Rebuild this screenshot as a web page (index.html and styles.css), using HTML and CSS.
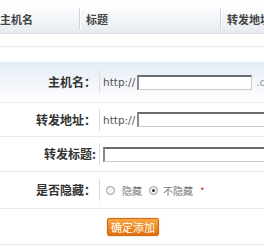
FILE: index.html
```html
<!DOCTYPE html>
<html lang="zh">
<head>
    <meta charset="UTF-8">
    <title>转发设置</title>
    <link rel="stylesheet" href="styles.css">
</head>
<body>
    <div class="list-head">
        <div class="col col-host">主机名</div>
        <div class="col col-title">标题</div>
        <div class="col col-url">转发地址</div>
    </div>
    <div class="list-empty"></div>

    <div class="form">
        <div class="row row-first">
            <div class="label">主机名：</div>
            <div class="value">
                <span class="prefix">http://</span>
                <input class="text short" type="text">
                <span class="suffix">.com</span>
            </div>
        </div>
        <div class="row">
            <div class="label">转发地址：</div>
            <div class="value">
                <span class="prefix">http://</span>
                <input class="text long" type="text">
            </div>
        </div>
        <div class="row">
            <div class="label">转发标题:</div>
            <div class="value">
                <input class="text long" type="text">
            </div>
        </div>
        <div class="row">
            <div class="label">是否隐藏：</div>
            <div class="value">
                <span class="radio"></span><span class="opt">隐藏</span>
                <span class="radio checked"></span><span class="opt">不隐藏</span>
                <span class="star">*</span>
            </div>
        </div>
        <div class="actions">
            <button class="submit">确定添加</button>
        </div>
    </div>
</body>
</html>
```

FILE: styles.css
```css
html, body {
    overflow: hidden;
}
body {
    margin: 0;
    width: 264px;
    font-family: "Noto Sans CJK SC", "DejaVu Sans", sans-serif;
    font-size: 12px;
    color: #333;
    background: #fff;
}
.list-head {
    display: flex;
    margin-top: 5px;
    height: 28px;
    align-items: center;
    background: linear-gradient(#ffffff, #e6ebf1);
    border-bottom: 1px solid #dde2e8;
    font-weight: bold;
    color: #444;
    font-size: 11px;
}
.col {
    box-sizing: border-box;
    height: 22px;
    line-height: 22px;
    padding-left: 6px;
    border-left: 1px solid #d0d5db;
    box-shadow: inset 1px 0 0 #fff;
    flex-shrink: 0;
    white-space: nowrap;
}
.col-host {
    width: 79px;
    padding-left: 0;
    border-left: none;
    box-shadow: none;
}
.col-title {
    width: 141px;
}
.col-url {
    flex: 1;
}
.list-empty {
    height: 12px;
    border-bottom: 1px solid #ebebeb;
}
.form {
    margin-top: 15px;
    background: linear-gradient(#e4ecf5, #ffffff 40px);
}
.row {
    display: flex;
    height: 33px;
    align-items: center;
    border-bottom: 1px solid #ebebeb;
}
.row-first {
    height: 40px;
}
.row:nth-child(3) {
    height: 34px;
}
.row:nth-child(4) {
    height: 36px;
}
.label {
    width: 100px;
    flex-shrink: 0;
    box-sizing: border-box;
    padding-right: 3px;
    text-align: right;
    white-space: nowrap;
    font-size: 12px;
    font-weight: bold;
    color: #333;
    border-right: 1px solid #dcdcdc;
    line-height: 22px;
}
.value {
    display: flex;
    flex-shrink: 0;
    align-items: center;
    padding-left: 3px;
    white-space: nowrap;
    font-size: 11px;
    color: #555;
}
.prefix {
    font-family: "DejaVu Sans", sans-serif;
    font-size: 10.5px;
    color: #555;
    margin-right: 2px;
}
.suffix {
    font-family: "DejaVu Sans", sans-serif;
    font-size: 10.5px;
    color: #999;
    margin-left: 4px;
}
.text {
    box-sizing: border-box;
    height: 15px;
    margin: 0;
    padding: 0 2px;
    border: 1px solid #ccc;
    border-top: 2px solid #6d6d6d;
    border-left: 2px solid #8a8a8a;
    background: #fff;
    flex-shrink: 0;
}
.short {
    width: 115px;
}
.long {
    width: 170px;
}
.radio {
    box-sizing: border-box;
    width: 9px;
    height: 9px;
    border: 1px solid #999;
    border-radius: 50%;
    background: #f4f4f4;
    margin: 0 7px 0 3px;
    position: relative;
}
.radio.checked {
    margin: 0 5px 0 0;
}
.radio.checked::after {
    content: "";
    position: absolute;
    left: 2px;
    top: 2px;
    width: 3px;
    height: 3px;
    border-radius: 50%;
    background: #333;
}
.opt {
    font-size: 10px;
    color: #777;
    margin-right: 7px;
}
.star {
    color: #e03030;
    font-size: 10px;
}
.actions {
    height: 35px;
    display: flex;
    align-items: center;
    padding-left: 107px;
    border-bottom: 1px solid #e6e6e6;
}
.submit {
    width: 52px;
    height: 18px;
    padding: 0;
    font-family: "Noto Sans CJK SC", sans-serif;
    font-size: 11px;
    line-height: 16px;
    color: #fff;
    background: linear-gradient(#f9a845, #e26f0c);
    border: 1px solid #d06a12;
    border-radius: 2px;
    box-shadow: 0 0 2px #f3c79a;
    cursor: pointer;
}
```
